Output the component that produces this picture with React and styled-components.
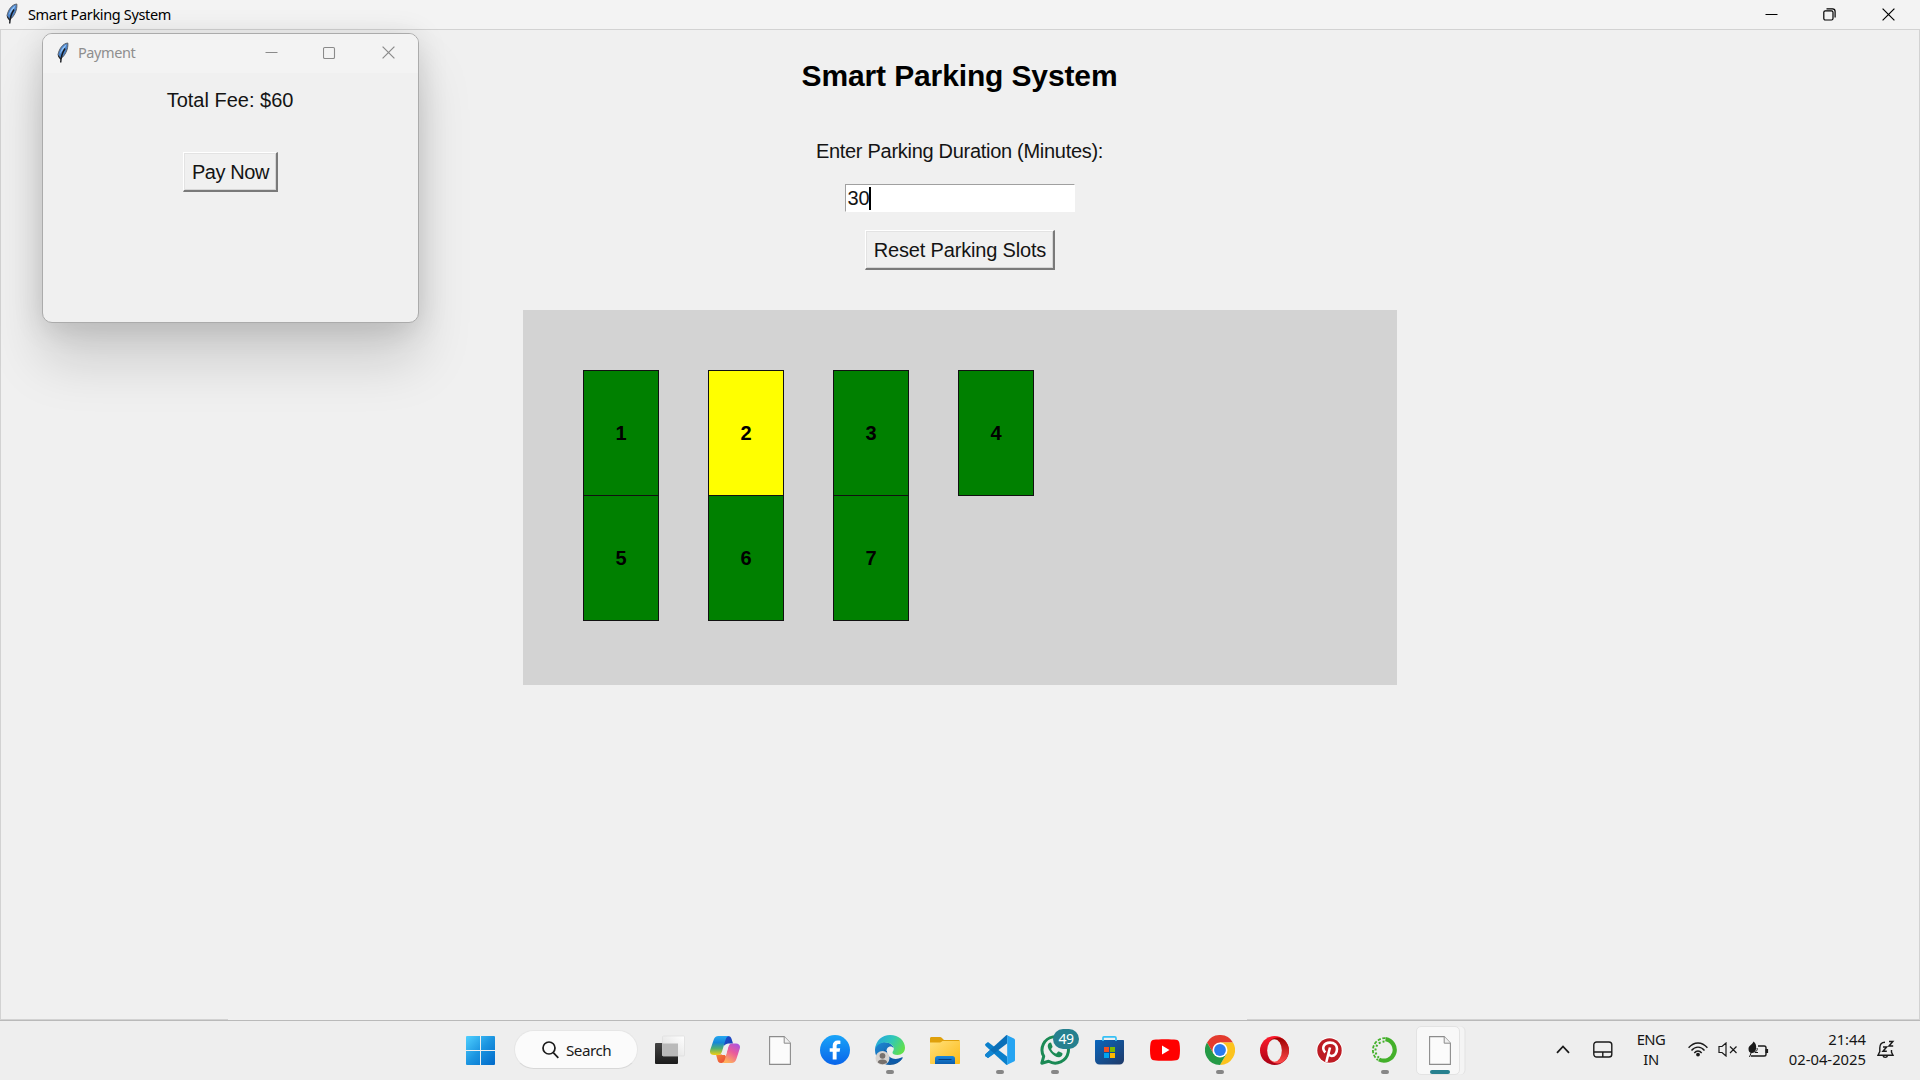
import React from "react";
import styled, { createGlobalStyle } from "styled-components";

const Global = createGlobalStyle`
  * { box-sizing: border-box; }
  body { margin: 0; background: #f0f0f0; overflow: hidden; }
`;

const UI = `"Noto Sans", "Open Sans", sans-serif`;
const ARIAL = `"Liberation Sans", Arial, sans-serif`;

const Desktop = styled.div`
  position: relative;
  width: 1920px;
  height: 1080px;
  display: flex;
  flex-direction: column;
  background: #f0f0f0;
  color: #000;
  overflow: hidden;
`;
const TitleBar = styled.header`
  height: 29px;
  flex: none;
  display: flex;
  align-items: center;
  background: #f3f3f3;
  padding: 0 1px 1px 5px;
  justify-content: space-between;
`;
const TitleGroup = styled.div`
  display: flex;
  align-items: center;
  gap: ${(p) => p.$gap}px;
`;
const TitleText = styled.span`
  font: 14.5px/20px ${UI};
  letter-spacing: ${(p) => p.$track}px;
  color: ${(p) => p.$color};
  padding-bottom: ${(p) => p.$lift || 0}px;
  white-space: nowrap;
`;
const Controls = styled.div`
  display: flex;
`;
const ControlButton = styled.div`
  width: ${(p) => p.$w}px;
  height: 28px;
  display: flex;
  align-items: center;
  justify-content: center;
`;
const Client = styled.main`
  flex: none;
  height: 991px;
  border: 1px solid #d2d2d2;
  border-bottom: 0;
  background: linear-gradient(90deg, #d2d2d2 227px, #f0f0f0 227px, #f0f0f0 1246px, #d2d2d2 1246px)
    bottom / 100% 1px no-repeat;
  display: flex;
  flex-direction: column;
  align-items: center;
`;
const Heading = styled.h1`
  margin: 28px 1px 0 0;
  font: bold 30px/36px ${ARIAL};
  letter-spacing: -0.13px;
`;
const Label = styled.div`
  font: 20px/24px ${ARIAL};
  letter-spacing: ${(p) => p.$track}px;
  margin-top: ${(p) => p.$top}px;
  margin-right: 1px;
  color: #141414;
  white-space: nowrap;
`;
const Entry = styled.div`
  margin-top: 21px;
  margin-right: 1px;
  width: 230px;
  height: 28px;
  background: #fff;
  border-style: solid;
  border-width: 1px;
  border-color: #a0a0a0 #fff #fff #a0a0a0;
  padding-left: 2px;
  display: flex;
  align-items: center;
  font: 20px/24px ${ARIAL};
  color: #141414;
`;
const Caret = styled.i`
  width: 2px;
  height: 23px;
  background: #000;
  margin-left: -1px;
`;
const TkButton = styled.div`
  width: ${(p) => p.$w}px;
  height: 40px;
  margin-top: ${(p) => p.$top}px;
  border-style: solid;
  border-width: 1px 2px 2px 1px;
  border-color: #fff #7a7a7a #7a7a7a #fff;
  box-shadow: inset 1px 1px #e3e3e3, inset -1px -1px #d6d6d6;
  display: flex;
  align-items: center;
  justify-content: center;
  padding-left: 1px;
  font: 20px/24px ${ARIAL};
  letter-spacing: ${(p) => p.$track}px;
  white-space: nowrap;
  color: #141414;
`;
const Lot = styled.section`
  width: 874px;
  height: 375px;
  margin-top: 40px;
  background: #d3d3d3;
  padding: 60px 0 0 60px;
  display: grid;
  grid-template-columns: repeat(4, 76px);
  grid-template-rows: 126px 125px;
  column-gap: 49px;
  align-content: start;
`;
const Slot = styled.div`
  height: 126px;
  margin-top: ${(p) => (p.$second ? -1 : 0)}px;
  border: 1px solid #111;
  background: ${(p) => (p.$selected ? "#ffff00" : "#008000")};
  display: flex;
  align-items: center;
  justify-content: center;
  font: bold 20px/24px ${ARIAL};
`;

const Popup = styled.div`
  position: absolute;
  left: 42px;
  top: 33px;
  width: 377px;
  height: 290px;
  border: 1px solid #ababab;
  border-radius: 10px;
  background: #f0f0f0;
  box-shadow: 0 38px 54px rgba(0, 0, 0, 0.15), 0 4px 30px rgba(0, 0, 0, 0.13);
  display: flex;
  flex-direction: column;
  align-items: center;
`;
const PopupBar = styled.div`
  align-self: stretch;
  height: 39px;
  flex: none;
  background: #f3f3f3;
  border-radius: 9px 9px 0 0;
  display: flex;
  align-items: center;
  justify-content: space-between;
  padding: 0 0 2px 13px;
`;

const Taskbar = styled.footer`
  flex: none;
  height: 60px;
  border-top: 1px solid #b9b9b9;
  background: #eeeeee;
  display: flex;
  align-items: stretch;
  padding-left: 453px;
`;
const AppSlot = styled.div`
  width: 55px;
  position: relative;
  display: flex;
  align-items: center;
  justify-content: center;
  padding-bottom: 1px;
`;
const SearchPill = styled.div`
  width: 124px;
  height: 39px;
  margin: 9px 4px 0 6px;
  border-radius: 20px;
  background: #fbfbfb;
  border: 1px solid #e6e6e6;
  border-bottom-color: #d8d8d8;
  display: flex;
  align-items: center;
  gap: 7px;
  padding-left: 27px;
  font: 15.2px/20px ${UI};
  letter-spacing: -0.5px;
  color: #1a1a1a;
`;
const Running = styled.i`
  position: absolute;
  bottom: 6px;
  left: 50%;
  transform: translateX(-50%);
  width: ${(p) => (p.$active ? 20 : 8)}px;
  height: 4px;
  border-radius: 2px;
  background: ${(p) => (p.$active ? "#26808f" : "#868686")};
`;
const Badge = styled.b`
  position: absolute;
  left: 26px;
  top: 8px;
  width: 26px;
  height: 20px;
  border-radius: 10px;
  background: #26808f;
  color: #fff;
  font: 14px/20px ${UI};
  letter-spacing: -0.5px;
  text-align: center;
`;
const ActiveTile = styled.div`
  width: 44px;
  height: 49px;
  margin-right: 3px;
  border-radius: 5px;
  background: #f8f8f8;
  border: 1px solid #e3e3e3;
  box-shadow: 5px 0 0 -0.5px #f4f4f4, 6px 0 0 -0.5px #e2e2e2;
  display: flex;
  align-items: center;
  justify-content: center;
  padding-left: 3px;
`;
const Tray = styled.div`
  margin-left: auto;
  display: flex;
  align-items: center;
  padding: 0 25px 2px 0;
`;
const TrayItem = styled.div`
  display: flex;
  margin-right: ${(p) => p.$right}px;
`;
const TrayText = styled.div`
  width: ${(p) => p.$w}px;
  margin-right: ${(p) => p.$right}px;
  padding-bottom: 2px;
  text-align: ${(p) => p.$align};
  font: 14.8px/20px ${UI};
  letter-spacing: ${(p) => p.$track}px;
  color: #151515;
  white-space: nowrap;
`;

const Feather = () => (
  <svg width="14" height="22" viewBox="0 0 14 22">
    <path d="M11.800 1C7 1.600 3.500 6 2 12.500l1.200 3 1.200 1.300C9 14 12.500 7 11.800 1Z" fill="#4a82c8" stroke="#59606a" strokeWidth="1" />
    <path d="M10.500 2.300C7 4 4.800 8 3.700 12.300l2.300-3c2-2.500 3.800-4 4.500-7Z" fill="#8fc0f4" />
    <path d="M9 6.500C7 9.500 5 14 4.700 20.500" stroke="#15181d" strokeWidth="1.400" fill="none" />
    <path d="M2.200 13.500 4.500 17l1.700-2.500" stroke="#222" strokeWidth="1.100" fill="none" />
  </svg>
);
const WinMin = ({ c }) => (
  <svg width="13" height="13" viewBox="0 0 13 13"><path d="M.5 6.500h12" stroke={c} strokeWidth="1" /></svg>
);
const WinMax = ({ c }) => (
  <svg width="13" height="13" viewBox="0 0 13 13"><rect x=".5" y="1.500" width="11" height="11" rx="1.200" fill="none" stroke={c} strokeWidth="1.100" /></svg>
);
const WinRestore = () => (
  <svg width="13" height="13" viewBox="0 0 13 13" fill="none" stroke="#000" strokeWidth="1.200">
    <rect x=".8" y="2.800" width="9.200" height="9.200" rx="1.500" />
    <path d="M3.500 .8h6a2.600 2.600 0 0 1 2.600 2.600v6" />
  </svg>
);
const WinClose = ({ c }) => (
  <svg width="13" height="13" viewBox="0 0 13 13"><path d="M.6.600l11.800 11.800M12.400.600.600 12.400" stroke={c} strokeWidth="1.200" /></svg>
);

const StartIcon = () => (
  <svg width="29" height="29" viewBox="0 0 29 29">
    <defs>
      <linearGradient id="st" x1="0" y1="0" x2="29" y2="29" gradientUnits="userSpaceOnUse">
        <stop stopColor="#4fd0ff" /><stop offset=".5" stopColor="#1b94e0" /><stop offset="1" stopColor="#0069c9" />
      </linearGradient>
    </defs>
    <path fill="url(#st)" d="M1 0h13v14H0V1a1 1 0 0 1 1-1ZM15 0h13a1 1 0 0 1 1 1v13H15ZM0 15h14v14H1a1 1 0 0 1-1-1ZM15 15h14v13a1 1 0 0 1-1 1H15Z" />
  </svg>
);
const SearchIcon = () => (
  <svg width="17" height="18" viewBox="0 0 17 18" fill="none" stroke="#1a1a1a" strokeWidth="1.700">
    <circle cx="7" cy="7" r="6" /><path d="m11.300 11.600 5 5.200" />
  </svg>
);
const TaskViewIcon = () => (
  <svg width="30" height="30" viewBox="0 0 30 30">
    <defs>
      <linearGradient id="tv" x1="0" y1="0" x2="0" y2="1"><stop stopColor="#444" /><stop offset="1" stopColor="#1b1b1b" /></linearGradient>
      <linearGradient id="tv2" x1="0" y1="1" x2="1" y2="0"><stop stopColor="#dadada" /><stop offset="1" stopColor="#fff" /></linearGradient>
    </defs>
    <rect x="0" y="8" width="23" height="21" rx="1" fill="url(#tv)" />
    <rect x="7.500" y="1" width="22" height="20" rx="1" fill="url(#tv2)" stroke="#ddd" strokeWidth=".7" />
    <path d="M7.500 8.500H23V21H7.500Z" fill="#b9b9b9" />
  </svg>
);
const CopilotIcon = () => (
  <svg width="30" height="28" viewBox="0 0 30 28">
    <defs>
      <linearGradient id="c1" x1="0" y1="0" x2="0" y2="1"><stop stopColor="#26a8f0" /><stop offset=".35" stopColor="#1686d8" /><stop offset=".65" stopColor="#4fae73" /><stop offset="1" stopColor="#f2cf10" /></linearGradient>
      <linearGradient id="c2" x1="1" y1="0" x2=".4" y2="1"><stop stopColor="#a052ea" /><stop offset=".5" stopColor="#ea5a9c" /><stop offset="1" stopColor="#ffb05c" /></linearGradient>
      <linearGradient id="c3" x1="0" y1="0" x2="1" y2="1"><stop stopColor="#1b4fd0" /><stop offset="1" stopColor="#1c3fb4" /></linearGradient>
      <linearGradient id="c4" x1="0" y1="0" x2="1" y2="1"><stop stopColor="#f58a35" /><stop offset="1" stopColor="#e8403a" /></linearGradient>
    </defs>
    <path d="M15 0h3c2 0 3 1 3.600 3l1.400 4.500h-4.500c-2 0-3 1-3.500 2.500L12 6Z" fill="url(#c3)" />
    <path d="M7 18.500h7.500L17 22l-2 3c-.8 1.500-2 2-4 2-2.500 0-3-1.500-3.600-3.500L6 18.500Z" fill="url(#c4)" />
    <path d="M8.500 0H19c-2 .3-2.800 1.600-3.500 4L12 15.500c-.7 2.500-2 3.500-4.500 3.500H4c-3 0-4.600-2-3.800-5L3.600 4C4.400 1.400 6 0 8.500 0Z" fill="url(#c1)" />
    <path d="M21.500 27H11.500c2-.3 2.800-1.600 3.500-4l3.300-12c.7-2.500 2-3.500 4.500-3.500H26c3 0 4.600 2 3.800 5L26.400 23c-.8 2.600-2.400 4-4.900 4Z" fill="url(#c2)" />
    <path d="M15.500 8.500h3.200l-.6 2.500-1.800 6.500c-.3 1-1 1.500-1.900 1.500h-2.800c.8-.7 1.100-1.500 1.400-2.500l1.500-6c.2-.9.500-1.500 1-2Z" fill="#eee" />
  </svg>
);
const FileIcon = () => (
  <svg width="22" height="29" viewBox="0 0 22 29">
    <path d="M.6.600h14.600l6.200 6.600v21.200H.6Z" fill="#fbfbfb" stroke="#8c8c8c" strokeWidth="1.100" />
    <path d="M15.200.600v6.600h6.200" fill="#f0f0f0" stroke="#8c8c8c" strokeWidth="1" />
  </svg>
);
const FacebookIcon = () => (
  <svg width="30" height="30" viewBox="0 0 30 30">
    <defs><linearGradient id="fb" x1="0" y1="0" x2="0" y2="1"><stop stopColor="#1aa4f8" /><stop offset="1" stopColor="#0864ea" /></linearGradient></defs>
    <circle cx="15" cy="15" r="15" fill="url(#fb)" />
    <path d="M12.700 24.500v-7.700H9.700v-3.600h3v-2.400c0-3.500 1.900-5.400 5-5.400 1 0 2 .1 2.700.3v3.300h-1.700c-1.600 0-2.100.8-2.100 1.900v2.300h3.600l-.6 3.600h-3v7.700Z" fill="#fff" />
  </svg>
);
const EdgeIcon = () => (
  <svg width="30" height="30" viewBox="0 0 30 30">
    <defs>
      <linearGradient id="e1" x1="0" y1=".2" x2="1" y2=".6"><stop stopColor="#24a5e0" /><stop offset=".5" stopColor="#30c7b8" /><stop offset="1" stopColor="#62e04a" /></linearGradient>
      <linearGradient id="e2" x1="0" y1="0" x2="1" y2="1"><stop stopColor="#1d8bd8" /><stop offset="1" stopColor="#114a8b" /></linearGradient>
    </defs>
    <path d="M0 15c0-5 4.500-8 9-8 5 0 9.500 3 9.700 6.300-1-1.500-3-2-4.500-1.500-4 1.200-4.200 9.700 2.800 12.200 4 1.400 7.500.5 11-1.500C25.500 27 20.500 30 15 30 6.500 30 0 23.300 0 15Z" fill="url(#e2)" />
    <path d="M9 14.500c-.8 7 5.500 14.500 11.500 14 3-.8 5.800-3.200 7.200-6-.3-.4-.8-.1-1.200.1-3 1.400-6.500 1.800-9.500.7-3.500-1.200-5.200-4.200-5-7Z" fill="#0c5aa8" />
    <path d="M0 14C1 5.500 7 0 15 0c9 0 15 6 15 12.800 0 4.400-3.300 7.200-7.500 7.200-3.500 0-5-1.400-5-2.600 0-1 1.300-1.600 1.300-4 0-2.600-3-6-8.800-6C5.500 7.400 1.500 10 0 14Z" fill="url(#e1)" />
    <circle cx="7.500" cy="23" r="7" fill="#d6d3d0" />
    <circle cx="7.500" cy="20.800" r="2.900" fill="#77716d" />
    <path d="M2.800 27.500c0-2 2-3 4.700-3s4.700 1 4.700 3a7 7 0 0 1-9.400 0Z" fill="#77716d" />
  </svg>
);
const FolderIcon = () => (
  <svg width="30" height="27" viewBox="0 0 30 27">
    <defs>
      <linearGradient id="fo" x1="0" y1="0" x2="1" y2="1"><stop stopColor="#ffe07a" /><stop offset="1" stopColor="#fdbb18" /></linearGradient>
      <linearGradient id="fp" x1="0" y1="0" x2="0" y2="1"><stop stopColor="#1a87dc" /><stop offset="1" stopColor="#0a5cad" /></linearGradient>
    </defs>
    <path d="M0 6V1.500C0 .6.600 0 1.500 0H10c.8 0 1.200.3 1.700.8L14 3h14.500c.9 0 1.500.6 1.500 1.500V8H0Z" fill="#dfa00b" />
    <path d="M0 5.500h9.500c1 0 1.500-.3 2-.8l1-.7H30v22c0 .6-.4 1-1 1H1c-.6 0-1-.4-1-1Z" fill="url(#fo)" />
    <path d="M5 27v-5.500c0-1.400 1-2.500 2.500-2.500h15c1.500 0 2.500 1.100 2.500 2.500V27Z" fill="url(#fp)" />
    <path d="M8.500 22.500h13" stroke="#073f7d" strokeWidth="1" />
  </svg>
);
const CodeIcon = () => (
  <svg width="30" height="30" viewBox="0 0 30 30">
    <path d="M22 21.500 3 7 .6 8.800c-.7.600-.7 1.500 0 2.200L21.500 30l1-.5Z" fill="#0a7fcb" />
    <path d="M22 8.500 3 23 .6 21.200c-.7-.6-.7-1.500 0-2.200L21.500 0l1 .5Z" fill="#0a6fb8" />
    <path d="M3 23 .6 21.200c-.7-.6-.7-1.500 0-2.200l4.500-4.100 4.500 3.500Z" fill="#1286d2" />
    <path d="M21.500 0 29 3.400c.6.300 1 .9 1 1.600v20c0 .7-.4 1.300-1 1.600L21.500 30c.4-.3.700-.8.700-1.400V1.400c0-.6-.3-1.100-.7-1.400Z" fill="#25a4f2" />
  </svg>
);
const WhatsAppIcon = () => (
  <svg width="30" height="30" viewBox="0 0 30 30">
    <path d="M1.800 28.200 3.700 21.300A13.200 13.200 0 1 1 8.600 26.300Z" fill="none" stroke="#1b8a55" strokeWidth="3" strokeLinejoin="round" />
    <path d="M10.500 7.500c-.6 0-1.300.3-1.900 1.100-1.800 2.300-.5 5.600 2.200 8.800 3 3.400 6.600 5.400 9.200 4.600 1.600-.5 2.500-1.700 2.500-3.200l-.3-.7-3.200-1.600c-.5-.2-.8-.1-1.100.3l-1.200 1.500c-.3.300-.6.300-1 .1-1.800-.8-3.400-2.200-4.400-4-.2-.4-.1-.6.100-.9l1-1.300.1-.7-1.300-3.400c-.1-.4-.4-.6-.7-.6Z" fill="#1b8a55" />
  </svg>
);
const StoreIcon = () => (
  <svg width="29" height="30" viewBox="0 0 29 30">
    <defs><linearGradient id="ms" x1="0" y1="0" x2="1" y2="1"><stop stopColor="#0a66bd" /><stop offset="1" stopColor="#203a68" /></linearGradient></defs>
    <path d="M0 6c0-.6.400-1 1-1h27c.6 0 1 .4 1 1v19c0 2.500-2 4.500-4.500 4.500h-20C2 29.500 0 27.500 0 25Z" fill="url(#ms)" />
    <path d="M8 6V3c0-1 .7-1.200 1.200-1.200h10.600c.7 0 1.200.4 1.200 1.200v3" fill="none" stroke="#36c0f5" strokeWidth="1.700" />
    <path d="M9 12h5v5H9Z" fill="#f25022" /><path d="M15 12h5v5h-5Z" fill="#7fba00" />
    <path d="M9 18h5v5H9Z" fill="#00a4ef" /><path d="M15 18h5v5h-5Z" fill="#ffb900" />
  </svg>
);
const YouTubeIcon = () => (
  <svg width="30" height="22" viewBox="0 0 30 22">
    <path d="M4 .700C8 0 22 0 26 .700c2 .3 3 1.300 3.400 3.300.8 4 .8 10 0 14-.4 2-1.400 3-3.400 3.300-4 .7-18 .7-22 0C2 21 1 20 .6 18c-.8-4-.8-10 0-14C1 2 2 1 4 .700Z" fill="#f00" />
    <path d="M12 6.500v9l7.500-4.500Z" fill="#fff" />
  </svg>
);
const ChromeIcon = () => (
  <svg width="30" height="30" viewBox="0 0 30 30">
    <path d="M2 7.500A15 15 0 0 1 28 7.500H15L8.500 18.700Z" fill="#e33b2e" />
    <path d="M28 7.500A15 15 0 0 1 15 30l6.500-11.300L15 7.500Z" fill="#fcc31e" />
    <path d="M15 30A15 15 0 0 1 2 7.500l6.500 11.200h13Z" fill="#249a46" />
    <circle cx="15" cy="15" r="7.500" fill="#fff" /><circle cx="15" cy="15" r="5.900" fill="#2a7bee" />
  </svg>
);
const OperaIcon = () => (
  <svg width="29" height="29" viewBox="0 0 29 29">
    <defs>
      <linearGradient id="o1" x1="0" y1="0" x2="0" y2="1"><stop stopColor="#ff1b2d" /><stop offset="1" stopColor="#a70014" /></linearGradient>
      <linearGradient id="o2" x1="0" y1="0" x2="0" y2="1"><stop stopColor="#9c0000" /><stop offset="1" stopColor="#ff4b4b" /></linearGradient>
    </defs>
    <ellipse cx="14.500" cy="14.500" rx="14.500" ry="14.500" fill="url(#o1)" />
    <path d="M10.500 4.500C15 0 22 1.300 25 4.800c5.300 5.700 5.300 13.700 0 19.400-3 3.500-10 4.800-14.500.3Z" fill="url(#o2)" />
    <ellipse cx="14.500" cy="14.500" rx="7.300" ry="11.200" fill="#eee" />
  </svg>
);
const PinterestIcon = () => (
  <svg width="27" height="27" viewBox="0 0 27 27">
    <circle cx="13.500" cy="13.500" r="13.200" fill="#fff" /><circle cx="13.500" cy="13.500" r="12.200" fill="#bd1c24" />
    <path d="M9.300 15.500C5 11 8 5.600 14 5.600c4.500 0 7 2.900 7 6.400 0 4-2.300 7-5.300 7-1.500 0-2.500-.8-2.900-1.700M14 10.500 10.300 25" fill="none" stroke="#fff" strokeWidth="2.600" />
  </svg>
);
const AnacondaIcon = () => (
  <svg width="28" height="28" viewBox="0 0 28 28" fill="none" stroke="#43b02a">
    <path d="M14.500 3.200A10.800 10.800 0 1 1 8 23.500" strokeWidth="4.200" />
    <path d="M14.500 2.200A12 12 0 0 0 7 24" strokeWidth="1.800" strokeDasharray="3.200 1.600" />
    <path d="M13.500 5.500A9 9 0 0 0 8.500 22" strokeWidth="2" strokeDasharray="2 2" />
  </svg>
);

const ink = { fill: "none", stroke: "#1a1a1a", strokeWidth: 1.4 };
const ChevronIcon = () => (<svg width="14" height="9" viewBox="0 0 14 9" {...ink} strokeWidth="1.800"><path d="M1 7.800 7 1.500l6 6.300" /></svg>);
const TouchpadIcon = () => (<svg width="20" height="17" viewBox="0 0 20 17" {...ink}><rect x=".8" y="1" width="18" height="15" rx="2.800" /><path d="M1 11h18M9.800 11v5" /></svg>);
const WifiIcon = () => (
  <svg width="20" height="15" viewBox="0 0 20 15" {...ink}>
    <path d="M.6 5.800C6-.7 14-.7 19.400 5.800M3.500 8.500c3.700-4.500 9.300-4.500 13 0M6.300 11c2.200-2.600 5.200-2.600 7.400 0" /><circle cx="10" cy="12.600" r="1.900" fill="#1a1a1a" stroke="none" />
  </svg>
);
const MuteIcon = () => (<svg width="20" height="15" viewBox="0 0 20 15" {...ink} strokeWidth="1.200"><path d="M1 4.500h3l4-3.500v13l-4-3.500H1ZM12 4.500l6.500 6.500M18.500 4.500 12 11" /></svg>);
const BatteryIcon = () => (
  <svg width="21" height="17" viewBox="0 0 21 17" {...ink}>
    <path d="M10 5h6.200c1 0 1.800.8 1.800 1.800v6.400c0 1-.8 1.800-1.800 1.800H3" /><path d="M18.800 8v4" strokeWidth="2.600" />
    <path d="M.5 8c0-3.500 3.500-4 5-7.500C8 2 8.500 5 8 8c-.4 2.600-2 4-4 4-2.200 0-3.500-1.500-3.500-4Z" fill="#1a1a1a" stroke="none" />
    <path d="m5 7-3.500 9M9 7c1 2-1 3-2 4.500h3" strokeWidth="1" />
  </svg>
);
const BellIcon = () => (
  <svg width="18" height="19" viewBox="0 0 18 19" {...ink}>
    <path d="M8 2.200C4.500 2.200 2.800 4.500 2.800 8v3.500L1 15.300h15l-1.500-3V10M6 15.500c.5 2.500 4 2.500 4.500 0" />
    <path d="M6 7h3.600L6 11.200h3.800M12 1.500h3.800L12 6h4.200" strokeWidth="1.500" />
  </svg>
);

const slots = [1, 2, 3, 4, 5, 6, 7];
const apps = [
  { icon: TaskViewIcon }, { icon: CopilotIcon }, { icon: FileIcon }, { icon: FacebookIcon },
  { icon: EdgeIcon, run: true }, { icon: FolderIcon }, { icon: CodeIcon, run: true },
  { icon: WhatsAppIcon, run: true, badge: "49" }, { icon: StoreIcon }, { icon: YouTubeIcon },
  { icon: ChromeIcon, run: true }, { icon: OperaIcon }, { icon: PinterestIcon }, { icon: AnacondaIcon, run: true },
];

export default function App() {
  return (
    <Desktop>
      <Global />
      <TitleBar>
        <TitleGroup $gap={9}>
          <Feather />
          <TitleText $color="#000" $track={-0.35}>Smart Parking System</TitleText>
        </TitleGroup>
        <Controls>
          <ControlButton $w={58}><WinMin c="#000" /></ControlButton>
          <ControlButton $w={58}><WinRestore /></ControlButton>
          <ControlButton $w={61}><WinClose c="#000" /></ControlButton>
        </Controls>
      </TitleBar>
      <Client>
        <Heading>Smart Parking System</Heading>
        <Label $top={45} $track={-0.29}>Enter Parking Duration (Minutes):</Label>
        <Entry>30<Caret /></Entry>
        <TkButton $w={190} $top={18} $track={-0.17}>Reset Parking Slots</TkButton>
        <Lot>
          {slots.map((n) => (
            <Slot key={n} $selected={n === 2} $second={n > 4}>{n}</Slot>
          ))}
        </Lot>
      </Client>
      <Taskbar>
        <AppSlot><StartIcon /></AppSlot>
        <SearchPill><SearchIcon />Search</SearchPill>
        {apps.map(({ icon: Icon, run, badge }, i) => (
          <AppSlot key={i}>
            <Icon />
            {badge && <Badge>{badge}</Badge>}
            {run && <Running />}
          </AppSlot>
        ))}
        <AppSlot>
          <ActiveTile><FileIcon /></ActiveTile>
          <Running $active />
        </AppSlot>
        <Tray>
          <TrayItem $right={23}><ChevronIcon /></TrayItem>
          <TrayItem $right={18}><TouchpadIcon /></TrayItem>
          <TrayText $w={40} $right={17} $align="center" $track={-0.5}>ENG<br />IN</TrayText>
          <TrayItem $right={10}><WifiIcon /></TrayItem>
          <TrayItem $right={10}><MuteIcon /></TrayItem>
          <TrayItem $right={11}><BatteryIcon /></TrayItem>
          <TrayText $w={86} $right={11} $align="right" $track={0}>21:44<br />02-04-2025</TrayText>
          <TrayItem $right={0}><BellIcon /></TrayItem>
        </Tray>
      </Taskbar>
      <Popup>
        <PopupBar>
          <TitleGroup $gap={8}>
            <Feather />
            <TitleText $color="#8e8e8e" $track={-0.4} $lift={2}>Payment</TitleText>
          </TitleGroup>
          <Controls>
            <ControlButton $w={58}><WinMin c="#8a8a8a" /></ControlButton>
            <ControlButton $w={58}><WinMax c="#8a8a8a" /></ControlButton>
            <ControlButton $w={60}><WinClose c="#8a8a8a" /></ControlButton>
          </Controls>
        </PopupBar>
        <Label $top={15} $track={0}>Total Fee: $60</Label>
        <TkButton $w={95} $top={40} $track={-0.4}>Pay Now</TkButton>
      </Popup>
    </Desktop>
  );
}
